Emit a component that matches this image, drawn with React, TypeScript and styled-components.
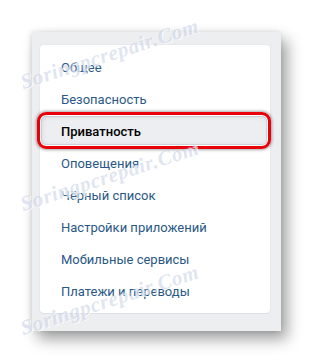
import React from "react";
import styled, { createGlobalStyle } from "styled-components";

const Global = createGlobalStyle`
  html, body { margin: 0; padding: 0; background: #ffffff; }
  body { font-family: Roboto, "Noto Sans", "Liberation Sans", sans-serif; }
`;

const Page = styled.div`
  position: relative;
  width: 313px;
  height: 363px;
  padding: 32px 0 0 32px;
  box-sizing: border-box;
  overflow: hidden;
`;

const Panel = styled.div`
  width: 249px;
  box-sizing: border-box;
  padding: 13px 11px 18px 8px;
  background: #edeef0;
  box-shadow: 6px 8px 14px rgba(0, 0, 0, 0.38), -1px 0 5px rgba(0, 0, 0, 0.12);
`;

const Card = styled.ul`
  list-style: none;
  margin: 0;
  padding: 6px 0;
  background: #ffffff;
  border-radius: 4px;
  box-shadow: 0 1px 0 0 #dce1e6, 0 0 0 1px #e7e8ec;
  display: flex;
  flex-direction: column;
`;

const Item = styled.li<{ $active?: boolean }>`
  position: relative;
  height: 32px;
  display: flex;
  align-items: center;
  padding-left: 21px;
  font-size: 13px;
  color: ${(p) => (p.$active ? "#000000" : "#2a5885")};
  font-weight: ${(p) => (p.$active ? 500 : 400)};
  background: ${(p) => (p.$active ? "#eceef2" : "transparent")};
  border-radius: ${(p) => (p.$active ? "8px" : "0")};
  box-shadow: ${(p) => (p.$active ? "inset 0 0 6px rgba(0,0,0,0.18)" : "none")};
  ${(p) =>
    p.$active &&
    `
    &::after {
      content: "";
      position: absolute;
      top: -3px;
      left: -3px;
      right: -1px;
      bottom: -2px;
      border: 3px solid #e8000a;
      border-radius: 9px;
      box-shadow: 0 0 3px 1px rgba(0,0,0,0.35), inset 0 0 0 1px #ffffff, inset 0 0 0 2px rgba(0,0,0,0.08);
      pointer-events: none;
    }
  `}
`;

const Watermark = styled.div<{ $top: number }>`
  position: absolute;
  left: 25px;
  top: ${(p) => p.$top}px;
  font-family: "Liberation Serif", "DejaVu Serif", serif;
  font-style: italic;
  font-weight: bold;
  font-size: 21px;
  letter-spacing: 0.6px;
  color: rgba(180, 192, 222, 0.42);
  text-shadow: 1px 1px 0 rgba(255, 255, 255, 0.7);
  transform: rotate(-18deg);
  transform-origin: left bottom;
  white-space: nowrap;
  pointer-events: none;
`;

const items = [
  "Общее",
  "Безопасность",
  "Приватность",
  "Оповещения",
  "Чёрный список",
  "Настройки приложений",
  "Мобильные сервисы",
  "Платежи и переводы",
];

export default function App() {
  return (
    <>
      <Global />
      <Page>
        <Panel>
          <Card>
            {items.map((t) => (
              <Item key={t} $active={t === "Приватность"}>
                {t}
              </Item>
            ))}
          </Card>
        </Panel>
        <Watermark $top={70}>Soringpcrepair.Com</Watermark>
        <Watermark $top={192}>Soringpcrepair.Com</Watermark>
        <Watermark $top={316}>Soringpcrepair.Com</Watermark>
      </Page>
    </>
  );
}
